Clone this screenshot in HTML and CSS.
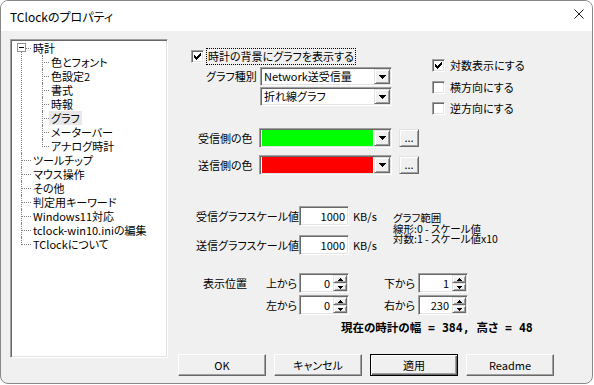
FILE: index.html
```html
<!DOCTYPE html>
<html lang="ja">
<head>
  <meta charset="UTF-8" />
  <title>TClockのプロパティ</title>
  <link rel="stylesheet" href="styles.css">
</head>
<body>
  <div class="window">
    <!-- title bar -->
    <div class="titlebar">
      <span class="title">TClockのプロパティ</span>
      <span class="close">
        <svg width="10" height="10" viewBox="0 0 10 10"><path d="M0.5 0.5L9.5 9.5M9.5 0.5L0.5 9.5" stroke="#1a1a1a" stroke-width="1" fill="none"/></svg>
      </span>
    </div>

    <div class="client">
      <!-- page tree -->
      <ul class="tree">
        <li><span class="toggle"></span><span class="label">時計</span>
          <ul>
            <li><span class="label">色とフォント</span></li>
            <li><span class="label">色設定2</span></li>
            <li><span class="label">書式</span></li>
            <li><span class="label">時報</span></li>
            <li><span class="label sel">グラフ</span></li>
            <li><span class="label">メーターバー</span></li>
            <li><span class="label">アナログ時計</span></li>
          </ul>
        </li>
        <li><span class="label">ツールチップ</span></li>
        <li><span class="label">マウス操作</span></li>
        <li><span class="label">その他</span></li>
        <li><span class="label">判定用キーワード</span></li>
        <li><span class="label">Windows11対応</span></li>
        <li><span class="label">tclock-win10.iniの編集</span></li>
        <li><span class="label">TClockについて</span></li>
      </ul>

      <div class="panel">
        <div class="top">
          <div class="top-left">
            <div class="main-check">
              <span class="checkbox"><svg width="11" height="11" viewBox="0 0 11 11"><path d="M2 4h1v3h-1zM3 5h1v3h-1zM4 6h1v3h-1zM5 5h1v3h-1zM6 4h1v3h-1zM7 3h1v3h-1zM8 2h1v3h-1z"/></svg></span>
              <span class="focus">時計の背景にグラフを表示する</span>
            </div>
            <div class="type-row">
              <span class="type-label">グラフ種別</span>
              <div class="combos">
                <div class="combo sunken">
                  <span class="combo-text">Network送受信量</span>
                  <span class="drop raised"><svg width="7" height="4" viewBox="0 0 7 4"><path d="M0 0h7v1h-1v1h-1v1h-1v1h-1v-1h-1v-1h-1v-1h-1z"/></svg></span>
                </div>
                <div class="combo sunken">
                  <span class="combo-text">折れ線グラフ</span>
                  <span class="drop raised"><svg width="7" height="4" viewBox="0 0 7 4"><path d="M0 0h7v1h-1v1h-1v1h-1v1h-1v-1h-1v-1h-1v-1h-1z"/></svg></span>
                </div>
              </div>
            </div>
          </div>
          <div class="top-right">
            <div class="check-row">
              <span class="checkbox"><svg width="11" height="11" viewBox="0 0 11 11"><path d="M2 4h1v3h-1zM3 5h1v3h-1zM4 6h1v3h-1zM5 5h1v3h-1zM6 4h1v3h-1zM7 3h1v3h-1zM8 2h1v3h-1z"/></svg></span>
              <span class="check-label">対数表示にする</span>
            </div>
            <div class="check-row">
              <span class="checkbox"></span>
              <span class="check-label">横方向にする</span>
            </div>
            <div class="check-row">
              <span class="checkbox"></span>
              <span class="check-label">逆方向にする</span>
            </div>
          </div>
        </div>

        <!-- colours -->
        <div class="colors">
          <div class="color-row">
            <span class="color-label">受信側の色</span>
            <div class="color-combo sunken">
              <span class="swatch green"></span>
              <span class="drop raised"><svg width="7" height="4" viewBox="0 0 7 4"><path d="M0 0h7v1h-1v1h-1v1h-1v1h-1v-1h-1v-1h-1v-1h-1z"/></svg></span>
            </div>
            <span class="dots raised">...</span>
          </div>
          <div class="color-row">
            <span class="color-label">送信側の色</span>
            <div class="color-combo sunken">
              <span class="swatch red"></span>
              <span class="drop raised"><svg width="7" height="4" viewBox="0 0 7 4"><path d="M0 0h7v1h-1v1h-1v1h-1v1h-1v-1h-1v-1h-1v-1h-1z"/></svg></span>
            </div>
            <span class="dots raised">...</span>
          </div>
        </div>

        <!-- scale -->
        <div class="scale">
          <div class="scale-left">
            <div class="scale-row">
              <span class="scale-label">受信グラフスケール値</span>
              <span class="edit sunken">1000</span>
              <span class="unit">KB/s</span>
            </div>
            <div class="scale-row">
              <span class="scale-label">送信グラフスケール値</span>
              <span class="edit sunken">1000</span>
              <span class="unit">KB/s</span>
            </div>
          </div>
          <div class="range">
            <div>グラフ範囲</div>
            <div>線形:0 - スケール値</div>
            <div>対数:1 - スケール値x10</div>
          </div>
        </div>

        <!-- position -->
        <div class="pos">
          <div class="pos-row first">
            <span class="pos-title">表示位置</span>
            <span class="pos-label">上から</span>
            <div class="spin sunken">
              <span class="val">0</span>
              <span class="updown"><span class="ud raised"><svg width="5" height="3" viewBox="0 0 5 3"><path d="M2 0h1v1h1v1h1v1h-5v-1h1v-1h1z"/></svg></span><span class="ud raised"><svg width="5" height="3" viewBox="0 0 5 3"><path d="M0 0h5v1h-1v1h-1v1h-1v-1h-1v-1h-1z"/></svg></span></span>
            </div>
            <span class="pos-label right">下から</span>
            <div class="spin sunken">
              <span class="val">1</span>
              <span class="updown"><span class="ud raised"><svg width="5" height="3" viewBox="0 0 5 3"><path d="M2 0h1v1h1v1h1v1h-5v-1h1v-1h1z"/></svg></span><span class="ud raised"><svg width="5" height="3" viewBox="0 0 5 3"><path d="M0 0h5v1h-1v1h-1v1h-1v-1h-1v-1h-1z"/></svg></span></span>
            </div>
          </div>
          <div class="pos-row second">
            <span class="pos-label">左から</span>
            <div class="spin sunken">
              <span class="val">0</span>
              <span class="updown"><span class="ud raised"><svg width="5" height="3" viewBox="0 0 5 3"><path d="M2 0h1v1h1v1h1v1h-5v-1h1v-1h1z"/></svg></span><span class="ud raised"><svg width="5" height="3" viewBox="0 0 5 3"><path d="M0 0h5v1h-1v1h-1v1h-1v-1h-1v-1h-1z"/></svg></span></span>
            </div>
            <span class="pos-label right">右から</span>
            <div class="spin sunken">
              <span class="val">230</span>
              <span class="updown"><span class="ud raised"><svg width="5" height="3" viewBox="0 0 5 3"><path d="M2 0h1v1h1v1h1v1h-5v-1h1v-1h1z"/></svg></span><span class="ud raised"><svg width="5" height="3" viewBox="0 0 5 3"><path d="M0 0h5v1h-1v1h-1v1h-1v-1h-1v-1h-1z"/></svg></span></span>
            </div>
          </div>
        </div>

        <div class="size">現在の時計の幅 = 384, 高さ = 48</div>

        <div class="buttons">
          <button class="btn">OK</button>
          <button class="btn">キャンセル</button>
          <button class="btn default">適用</button>
          <button class="btn">Readme</button>
        </div>
      </div>
    </div>
  </div>
</body>
</html>
```

FILE: styles.css
```css
* {
  box-sizing: border-box;
}

body {
  margin: 0;
  background: #fff;
  font-family: "Noto Sans CJK JP", sans-serif;
  font-size: 11px;
  font-feature-settings: "palt";
  color: #000;
}

.window {
  width: 593px;
  height: 384px;
  border: 1px solid #888;
  border-radius: 8px;
  background: #f0f0f0;
  overflow: hidden;
}

.titlebar {
  height: 30px;
  background: #fff;
  display: flex;
  align-items: center;
  justify-content: space-between;
  padding: 0 8px 0 9px;
  font-size: 12px;
}

.close {
  display: flex;
  margin-top: -4px;
}

.client {
  display: flex;
  padding: 8px 0 0 9px;
}

/* 3d borders */
.sunken {
  background: #fff;
  border: 1px solid;
  border-color: #a0a0a0 #fff #fff #a0a0a0;
  box-shadow: inset 1px 1px #696969, inset -1px -1px #e3e3e3;
  padding: 1px;
}

.raised {
  background: #f0f0f0;
  border: 1px solid;
  border-color: #e3e3e3 #696969 #696969 #e3e3e3;
  box-shadow: inset 1px 1px #fff, inset -1px -1px #a0a0a0;
}

/* tree */
.tree {
  width: 158px;
  height: 319px;
  flex: none;
  margin: 0;
  padding: 1px;
  list-style: none;
  background: #fff;
  border: 1px solid;
  border-color: #a0a0a0 #fff #fff #a0a0a0;
  box-shadow: inset 1px 1px #696969, inset -1px -1px #e3e3e3;
}

.tree ul {
  list-style: none;
  margin: 0;
  padding: 0;
}

.tree li {
  position: relative;
  line-height: 14px;
  white-space: nowrap;
}

.tree li::before {
  content: "";
  position: absolute;
  top: 7px;
  border-top: 1px dotted #808080;
}

.tree li::after {
  content: "";
  position: absolute;
  top: 0;
  bottom: 0;
  border-left: 1px dotted #808080;
}

.tree > li {
  padding-left: 19px;
}

.tree > li::before {
  left: 9px;
  width: 10px;
}

.tree > li::after {
  left: 9px;
}

.tree > li:first-child::after {
  top: 7px;
}

.tree li:last-child::after {
  bottom: auto;
  height: 8px;
}

.tree ul li {
  padding-left: 18px;
}

.tree ul li::before {
  left: 11px;
  width: 7px;
}

.tree ul li::after {
  left: 11px;
}

.toggle {
  position: absolute;
  left: 5px;
  top: 2px;
  width: 9px;
  height: 9px;
  border: 1px solid #919191;
  background: #fff;
  z-index: 1;
}

.toggle::after {
  content: "";
  position: absolute;
  left: 1px;
  top: 3px;
  width: 5px;
  height: 1px;
  background: #000;
}

.label {
  display: inline-block;
  padding: 0 2px;
}

.label.sel {
  background: #e8e8e8;
}

/* right side */
.panel {
  flex: 1;
  margin-left: 1px;
  padding-top: 9px;
  display: flex;
  flex-direction: column;
  white-space: nowrap;
}

.top {
  display: flex;
  height: 75px;
}

.top-left {
  width: 263px;
  flex: none;
  padding-left: 22px;
}

.main-check {
  display: flex;
  align-items: center;
  height: 17px;
}

.checkbox {
  width: 13px;
  height: 13px;
  flex: none;
  background: #fff;
  border: 1px solid;
  border-color: #a0a0a0 #fff #fff #a0a0a0;
  box-shadow: inset 1px 1px #696969, inset -1px -1px #e3e3e3;
}

.checkbox svg {
  display: block;
}

.focus {
  margin-left: 2px;
  border: 1px dotted #000;
  padding: 0 1px;
  line-height: 15px;
}

.type-row {
  display: flex;
  margin: 2px 0 0 15px;
}

.type-label {
  width: 54px;
  flex: none;
  line-height: 19px;
}

.combos {
  display: flex;
  flex-direction: column;
  gap: 1px;
}

.combo {
  width: 132px;
  height: 19px;
  display: flex;
}

.combo-text {
  flex: 1;
  padding-left: 2px;
  line-height: 15px;
}

.drop {
  width: 16px;
  flex: none;
  display: flex;
  align-items: center;
  justify-content: center;
}

.drop svg {
  margin-left: 1px;
}

.top-right {
  padding-top: 11px;
}

.check-row {
  display: flex;
  height: 21.5px;
}

.check-label {
  margin-left: 5px;
  line-height: 13px;
}

/* colours */
.colors {
  margin-top: 5px;
  display: flex;
  flex-direction: column;
  gap: 7px;
}

.color-row {
  display: flex;
  align-items: center;
  height: 20px;
  padding-left: 29px;
}

.color-label {
  width: 61px;
  flex: none;
}

.color-combo {
  width: 133px;
  height: 20px;
  flex: none;
  display: flex;
  padding: 1px 1px 1px 2px;
}

.swatch {
  flex: 1;
  margin-right: 1px;
}

.green {
  background: #00ff00;
}

.red {
  background: #ff0000;
}

.dots {
  margin-left: 7px;
  width: 20px;
  height: 18px;
  text-align: center;
  line-height: 14px;
}

/* scale */
.scale {
  margin-top: 31px;
  display: flex;
}

.scale-left {
  width: 224px;
  flex: none;
  padding-left: 27px;
  display: flex;
  flex-direction: column;
  gap: 9px;
}

.scale-row {
  display: flex;
  align-items: center;
  height: 20px;
}

.scale-label {
  width: 103px;
  flex: none;
}

.edit {
  width: 50px;
  height: 20px;
  flex: none;
  text-align: right;
  padding-right: 3px;
  line-height: 16px;
}

.unit {
  margin-left: 4px;
}

.range {
  margin-top: 7px;
  line-height: 10.5px;
  font-size: 10.5px;
}

/* position */
.pos {
  margin-top: 18px;
  display: flex;
  flex-direction: column;
  gap: 2px;
}

.pos-row {
  display: flex;
  align-items: center;
  height: 20px;
}

.pos-row.first {
  padding-left: 34px;
}

.pos-row.second {
  padding-left: 97px;
}

.pos-title {
  width: 63px;
  flex: none;
}

.pos-label {
  width: 33px;
  flex: none;
}

.pos-label.right {
  margin-left: 35px;
  width: 34px;
}

.spin {
  width: 50px;
  height: 20px;
  flex: none;
  display: flex;
}

.val {
  flex: 1;
  text-align: right;
  padding-right: 3px;
  line-height: 16px;
}

.updown {
  width: 14px;
  display: flex;
  flex-direction: column;
}

.ud {
  flex: 1;
  display: flex;
  align-items: center;
  justify-content: center;
}

.ud svg {
  display: block;
}

.size {
  margin-top: 6px;
  padding-left: 172px;
  line-height: 14px;
  font-family: "DejaVu Sans Mono", "Noto Sans CJK JP", monospace;
  font-size: 11.5px;
  font-weight: bold;
}

.buttons {
  margin-top: 19px;
  padding-left: 9px;
  display: flex;
  gap: 8px;
}

.btn {
  width: 88px;
  height: 22px;
  padding: 0;
  font: inherit;
  color: #000;
  background: #f0f0f0;
  border: 1px solid;
  border-color: #fff #696969 #696969 #fff;
  box-shadow: inset -1px -1px #a0a0a0;
  line-height: 18px;
}

.btn.default {
  border-color: #000;
  box-shadow: inset 1px 1px #fff, inset -1px -1px #696969, inset -2px -2px #a0a0a0;
}
```
